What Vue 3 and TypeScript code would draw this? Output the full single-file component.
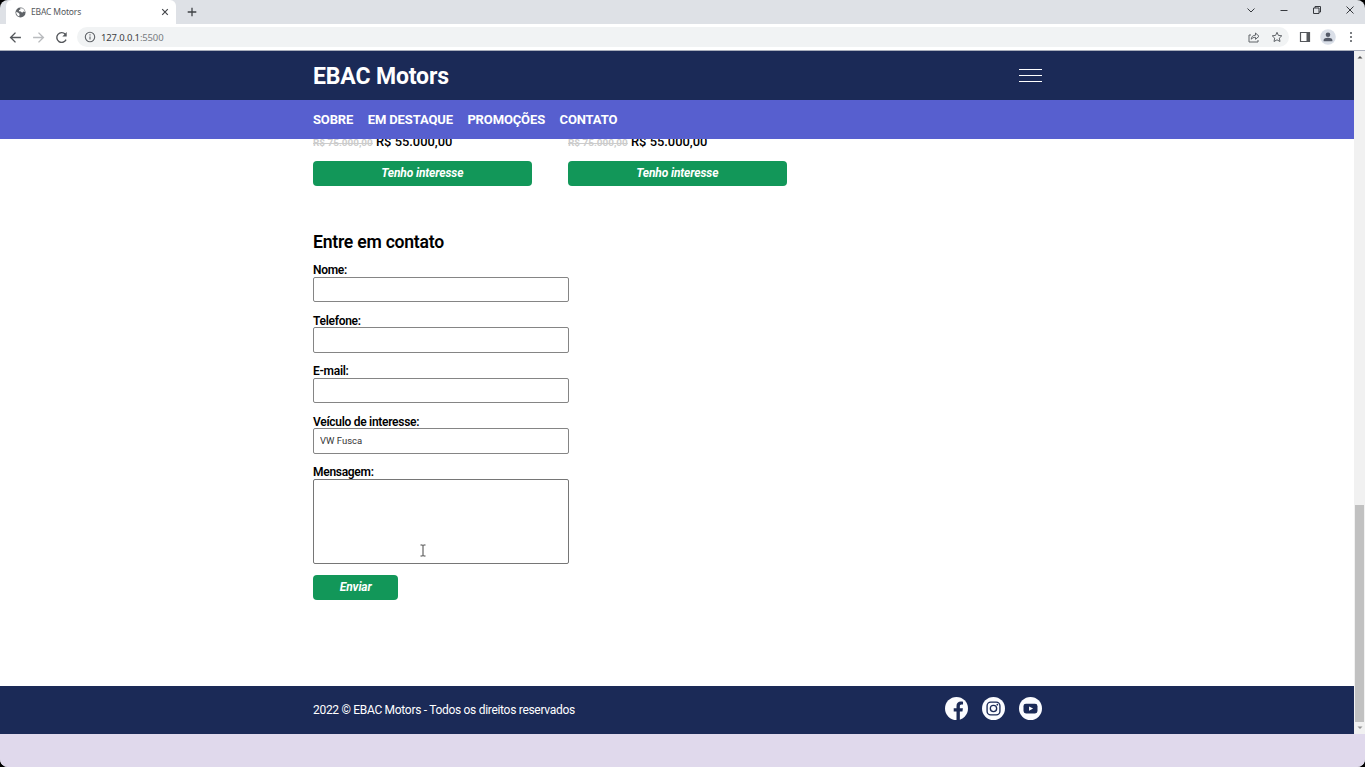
<script setup lang="ts">
interface Field { label: string; value: string }

const links: string[] = ['SOBRE', 'EM DESTAQUE', 'PROMOÇÕES', 'CONTATO']
const offers: { id: number; old: string; price: string }[] = [
  { id: 1, old: 'R$ 75.000,00', price: 'R$ 55.000,00' },
  { id: 2, old: 'R$ 75.000,00', price: 'R$ 55.000,00' },
]
const fields: Field[] = [
  { label: 'Nome:', value: '' },
  { label: 'Telefone:', value: '' },
  { label: 'E-mail:', value: '' },
  { label: 'Veículo de interesse:', value: 'VW Fusca' },
]
</script>

<template>
  <div class="screen">
    <div class="window">
      <div class="tabs">
        <div class="tab">
          <svg class="globe" viewBox="0 0 12 12"><circle cx="6" cy="6" r="5.5" fill="#5f6368" /><path d="M1.3 5.2 3.6 6.2 5 7.6 4.6 10.4C2.400 9.700 1.200 8 1.300 5.200ZM5.300 1.500 7.600 1.300C9.600 2 10.700 3.500 10.800 5.400L9 5 7.800 6.300 6.300 5 4.200 4.600 4.500 3.200 6 2.800Z" fill="#fff" /></svg>
          <span class="tab-title">EBAC Motors</span>
          <svg class="tab-close" viewBox="0 0 8 8"><path d="m1.200 1.200 5.600 5.600m0-5.600L1.200 6.800" stroke="#45484c" stroke-width="1.200" /></svg>
        </div>
        <svg class="plus" viewBox="0 0 10 10"><path d="M5 .7v8.600M.7 5h8.600" stroke="#3f4246" stroke-width="1.300" /></svg>
        <div class="controls">
          <svg viewBox="0 0 10 10"><path d="m1.500 3.500 3.500 3.500 3.500-3.500" /></svg>
          <svg viewBox="0 0 10 10"><path d="M1.500 5.500h7" /></svg>
          <svg viewBox="0 0 10 10"><path d="M1.500 3h5.500v5.500H1.500zM3 3V1.500h5.500V7H7" /></svg>
          <svg viewBox="0 0 10 10"><path d="m1.500 1.500 7 7m0-7-7 7" /></svg>
        </div>
      </div>
      <div class="toolbar">
        <div class="nav-icons">
          <svg viewBox="0 0 12 12" stroke="#55585c"><path d="M11 6H1.500M6 1.500 1.500 6 6 10.500" /></svg>
          <svg viewBox="0 0 12 12" stroke="#b9bbbe"><path d="M1 6h9.500M6 1.500 10.500 6 6 10.500" /></svg>
          <svg viewBox="0 0 12 12" stroke="#55585c"><path d="M10.200 8A4.500 4.500 0 1 1 9.500 3" /><path d="M10.800 1v4h-4z" fill="#55585c" stroke="none" /></svg>
        </div>
        <div class="address">
          <svg class="info" viewBox="0 0 12 12"><circle cx="6" cy="6" r="4.700" /><path d="M6 5.400v3.200M6 3.300v1.200" /></svg>
          <span class="url"><b>127.0.0.1</b>:5500</span>
          <svg class="share" viewBox="0 0 12 12"><path d="M3 4H1v7h9V9M3.200 8.200C3.500 5.500 5 4.300 7.500 4.200V2L11 5.300 7.500 8.300V6.300C5.600 6.300 4.200 7 3.200 8.200Z" /></svg>
          <svg class="star" viewBox="0 0 12 12"><path d="m6 1.300 1.400 3.100 3.400.4-2.500 2.300.7 3.400-3-1.700-3 1.700.7-3.400-2.500-2.300 3.400-.4Z" /></svg>
        </div>
        <svg class="panel-icon" viewBox="0 0 12 12"><path d="M1.500 1.500h9v9h-9z" fill="none" stroke="#55585c" stroke-width="1.200" /><path d="M7.500 1.500h3v9h-3z" fill="#55585c" /></svg>
        <svg class="avatar" viewBox="0 0 16 16"><circle cx="8" cy="8" r="7.800" fill="#dadfe8" /><circle cx="8" cy="5.800" r="2.300" fill="#555b69" /><path d="M3.600 12.200V11C3.600 9.500 5.800 8.800 8 8.800s4.400.7 4.400 2.200v1.200Z" fill="#555b69" /></svg>
        <svg class="dots" viewBox="0 0 4 12"><circle cx="2" cy="2" r="1" /><circle cx="2" cy="6" r="1" /><circle cx="2" cy="10" r="1" /></svg>
      </div>

      <div class="viewport">
        <div class="page">
          <header>
            <div class="container bar">
              <h1>EBAC Motors</h1>
              <div class="burger"><i /><i /><i /></div>
            </div>
          </header>
          <nav>
            <div class="container links"><a v-for="link in links" :key="link">{{ link }}</a></div>
          </nav>
          <main class="container">
            <section class="offers">
              <article v-for="offer in offers" :key="offer.id">
                <p><s>{{ offer.old }}</s> {{ offer.price }}</p>
                <button>Tenho interesse</button>
              </article>
            </section>
            <h2>Entre em contato</h2>
            <form @submit.prevent>
              <label v-for="field in fields" :key="field.label">
                <span>{{ field.label }}</span>
                <input type="text" :value="field.value">
              </label>
              <label class="message"><span>Mensagem:</span>
                <textarea />
                <svg class="cursor" viewBox="0 0 8 13"><path d="M1.500 1h1.700l.8.600.8-.6h1.700M4 1.500v10M1.500 12h1.700l.8-.6.8.6h1.700" /></svg>
              </label>
              <button class="send">Enviar</button>
            </form>
          </main>
          <footer>
            <div class="container bar">
              <p>2022 © EBAC Motors - Todos os direitos reservados</p>
              <div class="social">
                <svg viewBox="0 0 24 24"><circle cx="12" cy="12" r="12" fill="#fbfcff" /><path d="M12 24v-8.800H9.100v-3.500H12V9.300c0-3 1.800-4.600 4.500-4.600 1.200 0 2.300.2 2.300.2v2.900h-1.500c-1.400 0-1.800.8-1.800 1.700v2.200h3.200l-.5 3.500h-2.700V24Z" fill="#1b2a57" /></svg>
                <svg viewBox="0 0 24 24"><circle cx="12" cy="12" r="12" fill="#fbfcff" /><g fill="none" stroke="#1b2a57" stroke-width="1.400"><rect x="5.300" y="5.300" width="13.400" height="13.400" rx="3.800" /><circle cx="12" cy="12" r="3.300" /></g><circle cx="16" cy="8" r=".9" fill="#1b2a57" /></svg>
                <svg viewBox="0 0 24 24"><circle cx="12" cy="12" r="12" fill="#fbfcff" /><rect x="4.700" y="7" width="14.600" height="10.200" rx="2.600" fill="#1b2a57" /><path d="m10.500 9.800 4.200 2.300-4.200 2.300Z" fill="#fff" /></svg>
              </div>
            </div>
          </footer>
        </div>
        <div class="scrollbar">
          <svg viewBox="0 0 10 10"><path d="M2.500 6.500 5 4l2.500 2.500Z" fill="#505050" /></svg>
          <div class="thumb" />
          <svg viewBox="0 0 10 10"><path d="M2.500 3.500 5 6l2.500-2.500Z" fill="#929292" /></svg>
        </div>
      </div>
      <div class="desk" />
    </div>
  </div>
</template>

<style>
html, body { margin: 0; overflow: hidden; background: #000; }
</style>

<style scoped>
* { box-sizing: border-box; }
svg { display: block; flex: none; }
h1, h2, p { margin: 0; }
.screen { width: 1365px; height: 767px; background: #000; font-family: Roboto, sans-serif; }
.window { height: 767px; border-radius: 8px; overflow: hidden; display: flex; flex-direction: column; background: #dee1e6; }
.tabs { height: 24px; display: flex; align-items: center; flex: none; }
.tab { width: 170px; height: 24px; margin-left: 6px; padding: 0 7px 0 9px; background: #fff; border-radius: 6px 6px 0 0; display: flex; align-items: center; }
.globe { width: 11px; height: 11px; }
.tab-title { margin-left: 5px; margin-top: -1px; flex: 1; font: 8.500px "Noto Sans", sans-serif; letter-spacing: -.15px; color: #55585c; }
.tab-close { width: 8px; height: 8px; }
.plus { width: 10px; height: 10px; margin-left: 11px; }
.controls { display: flex; gap: 23px; margin: -4px 10px 0 auto; }
.controls svg { width: 10px; height: 10px; fill: none; stroke: #36393e; stroke-width: 1; }
.toolbar { height: 27px; flex: none; background: #fff; border-bottom: 1px solid #a8adbb; display: flex; align-items: center; padding: 0 8px 0 9px; }
.nav-icons { display: flex; gap: 10px; }
.nav-icons svg { width: 13px; height: 13px; fill: none; stroke-width: 1.300; }
.address { height: 20px; margin-left: 9px; width: 1212px; border-radius: 10px; background: #f1f3f4; display: flex; align-items: center; padding: 0 6px 0 7px; }
.info { width: 12px; height: 12px; fill: none; stroke: #5f6368; stroke-width: 1.100; }
.url { margin-left: 5px; margin-right: auto; font: 9.500px "Noto Sans", sans-serif; letter-spacing: -.15px; color: #777b80; }
.url b { font-weight: 400; color: #3d4043; }
.share, .star { width: 12px; height: 12px; fill: none; stroke: #606469; stroke-width: 1; }
.share { margin-right: 11px; }
.panel-icon { width: 12px; height: 12px; margin-left: 10px; }
.avatar { width: 16px; height: 16px; margin-left: 9px; }
.dots { width: 4px; height: 12px; margin-left: auto; margin-right: 4px; fill: #4f5358; }
.viewport { height: 683px; flex: none; display: flex; background: #fff; }
.page { width: 1354px; display: flex; flex-direction: column; }
.container { width: 729px; margin-left: 313px; }
header { height: 49px; background: #1b2a57; }
.bar { height: 100%; display: flex; align-items: center; justify-content: space-between; }
h1 { margin-top: 1px; font-size: 23px; letter-spacing: -.14px; line-height: 27px; font-weight: 700; color: #fff; }
.burger { width: 23px; display: flex; flex-direction: column; gap: 5px; }
.burger i { height: 1px; background: #fff; }
nav { position: relative; z-index: 1; height: 39px; background: #575fcf; }
.links { display: flex; gap: 14.500px; height: 38px; align-items: center; font-size: 13px; letter-spacing: -.13px; font-weight: 700; color: #fff; }
main { height: 547px; }
.offers { display: flex; gap: 36.500px; height: 47px; }
article { width: 218.500px; height: 47px; display: flex; flex-direction: column; justify-content: flex-end; }
article p { height: 15px; line-height: 15px; margin-bottom: 12px; font-size: 12.900px; font-weight: 500; color: #000; white-space: nowrap; }
s { font-size: 9.950px; font-weight: 700; color: #ccc; }
button { display: block; width: 100%; height: 25px; flex: none; border: 0; padding: 0 0 1px; border-radius: 4px; background: #129759; color: #fff; font: italic 700 12px Roboto, sans-serif; letter-spacing: -.13px; }
h2 { margin-top: 46px; font-size: 17.600px; letter-spacing: -.24px; line-height: 20px; font-weight: 600; color: #000; }
form { padding-top: 11px; width: 256.400px; }
label { display: block; height: 50.500px; font-size: 12px; letter-spacing: -.29px; line-height: 15px; font-weight: 600; color: #000; }
label span { display: block; height: 13.500px; }
input, textarea { display: block; width: 256.400px; height: 25.500px; padding: 0 6px; border: 1px solid #858585; border-radius: 2px; background: #fff; color: #333; font: 9.480px Roboto, sans-serif; outline: 0; }
textarea { height: 85px; resize: none; border-color: #767676; }
.message { height: 110.400px; position: relative; }
.cursor { position: absolute; left: 106px; top: 79px; width: 8px; height: 13px; fill: none; stroke: #444; stroke-width: 1; }
.send { width: 85.400px; }
footer { height: 48px; background: #1b2a57; }
footer p { font-size: 12px; letter-spacing: -.3px; line-height: 14px; color: #fff; }
.social { display: flex; gap: 14px; margin-top: -3px; }
.social svg { width: 23px; height: 23px; }
.scrollbar { width: 11px; display: flex; flex-direction: column; background: #f1f1f1; padding-left: 1px; }
.scrollbar svg { width: 10px; height: 12px; }
.thumb { height: 217px; margin-top: auto; margin-right: 1px; background: #c1c1c1; }
.desk { height: 33px; background: #e0d9ec; }
</style>
